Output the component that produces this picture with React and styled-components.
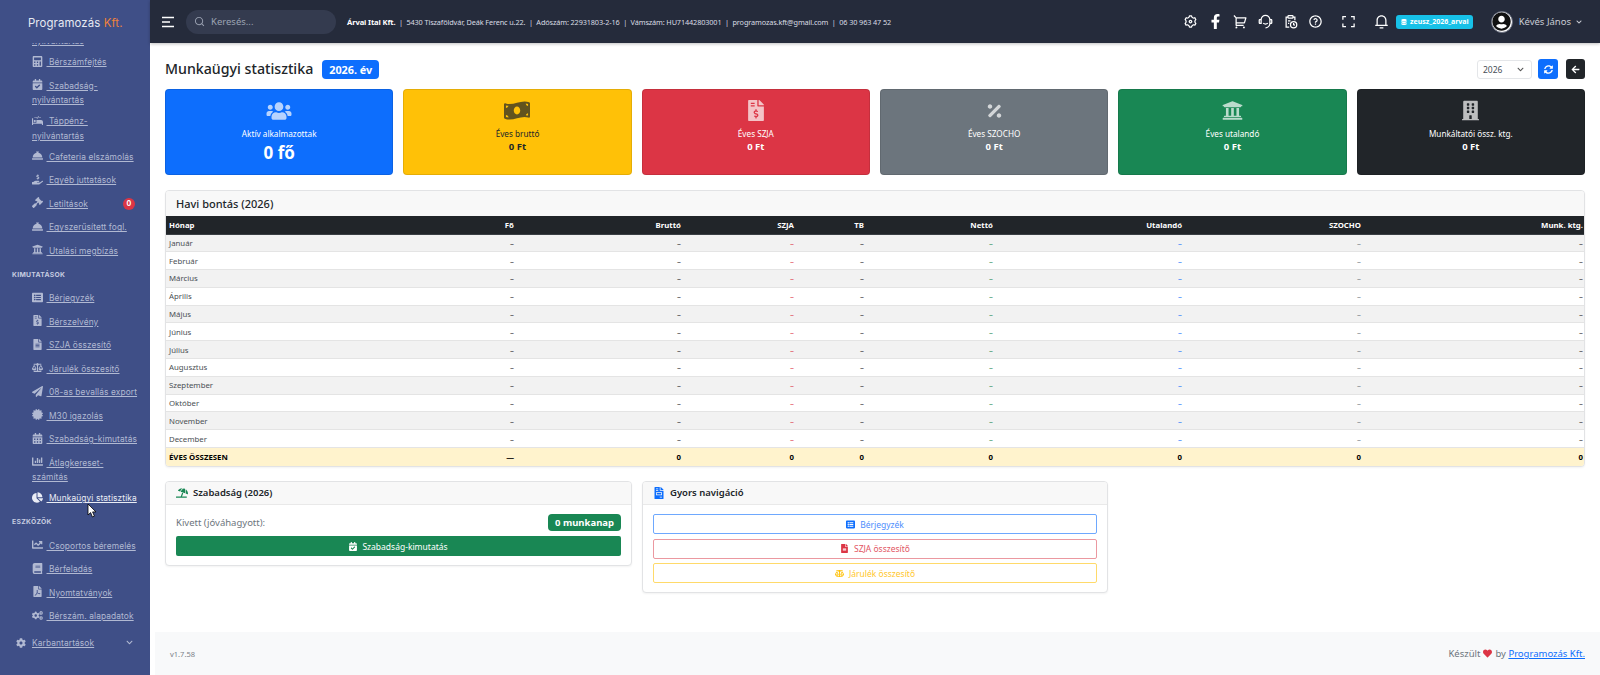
import React from "react";
import styled, { createGlobalStyle } from "styled-components";
import {
  FaCalculator, FaCalendarCheck, FaProcedures, FaConciergeBell, FaHandHoldingUsd, FaGavel,
  FaUniversity, FaListAlt, FaFileInvoiceDollar, FaFileAlt, FaBalanceScale, FaPaperPlane,
  FaCertificate, FaCalendarAlt, FaChartBar, FaChartPie, FaChartLine, FaBook, FaFilePdf,
  FaCogs, FaCog, FaChevronDown, FaFacebookF, FaDatabase, FaUserCircle, FaUsers,
  FaMoneyBillWave, FaPercentage, FaBuilding, FaSyncAlt, FaArrowLeft, FaUmbrellaBeach,
  FaFileInvoice, FaHeart,
} from "react-icons/fa";
import {
  RiSettings3Line, RiShoppingCart2Line, RiCustomerService2Line, RiQuestionLine,
  RiFullscreenLine, RiNotification3Line, RiSearchLine,
} from "react-icons/ri";

const GlobalStyle = createGlobalStyle`
  html, body { margin: 0; padding: 0; height: 100%; overflow: hidden; }
  body { font-family: "Noto Sans", "Open Sans", sans-serif; color: #212529; background: #fff; }
  * { box-sizing: border-box; }
`;

const Page = styled.div`
  display: flex;
  width: 1600px;
  height: 675px;
  overflow: hidden;
`;

const Sidebar = styled.aside`
  position: relative;
  width: 150px;
  flex-shrink: 0;
  display: flex;
  flex-direction: column;
  background: #3f4f87;
  font-family: Inter, sans-serif;
`;

const Logo = styled.div`
  height: 43px;
  flex-shrink: 0;
  padding: 14px 0 0 28px;
  font-size: 11.4px;
  line-height: 18px;
  letter-spacing: 0.1px;
  color: #e6e9f2;
  z-index: 1;
  background: #3f4f87;
  span { color: #f0823a; }
`;

const Nav = styled.nav`
  flex: 1;
  overflow: hidden;
`;

const NavInner = styled.div`
  margin-top: -28px;
`;

const NavItem = styled.a`
  position: relative;
  display: block;
  padding: 4.6px 12px 4.6px 32px;
  margin-bottom: ${(p) => (p.$wrapped ? -2.2 : 0)}px;
  font-size: 8.4px;
  line-height: 14.3px;
  letter-spacing: 0.1px;
  color: ${(p) => (p.$active ? "#e9ecf5" : "#b1b9d2")};
  svg {
    width: 11px;
    height: 11px;
    vertical-align: -1.5px;
    margin-right: 3.5px;
  }
  span { text-decoration: underline; }
`;

const SectionLabel = styled.div`
  padding: 0 0 0 12px;
  height: 24px;
  line-height: 24px;
  font-size: 6.8px;
  font-weight: 700;
  letter-spacing: 0.3px;
  color: #c6cce0;
`;

const NavBadge = styled.span`
  position: absolute;
  right: 15px;
  top: 6px;
  width: 12px;
  height: 12px;
  border-radius: 50%;
  background: #dc3545;
  color: #fff;
  font-size: 7px;
  font-weight: 700;
  line-height: 12px;
  text-align: center;
  text-decoration: none !important;
`;

const TreeItem = styled.a`
  display: flex;
  align-items: center;
  margin-top: 3px;
  padding: 4.5px 17px 4.5px 16px;
  font-size: 8.4px;
  line-height: 14.3px;
  letter-spacing: 0.1px;
  color: #b1b9d2;
  span { text-decoration: underline; flex: 1; }
  svg:first-child { width: 10px; height: 10px; margin-right: 6px; }
  svg:last-child { width: 7px; height: 7px; }
`;

const Cursor = styled.svg`
  position: absolute;
  left: 87px;
  top: 503px;
  width: 10px;
  height: 15px;
`;

const Column = styled.div`
  flex: 1;
  min-width: 0;
  display: flex;
  flex-direction: column;
`;

const TopBar = styled.header`
  height: 43px;
  flex-shrink: 0;
  display: flex;
  align-items: center;
  background: #252b3b;
  color: #fff;
  padding-left: 12px;
  box-shadow: 0 1px 3px rgba(0, 0, 0, 0.25);
  z-index: 1;
`;

const Burger = styled.svg`
  width: 13px;
  height: 12px;
  flex-shrink: 0;
`;

const SearchBox = styled.div`
  margin-left: 11px;
  width: 150px;
  height: 24px;
  border-radius: 12px;
  background: #343b4f;
  display: flex;
  align-items: center;
  gap: 6px;
  padding-left: 8px;
  font-size: 9.5px;
  color: #9ca3b3;
  svg { width: 11px; height: 11px; }
`;

const CompanyInfo = styled.div`
  margin-left: 11px;
  font-size: 7.3px;
  letter-spacing: -0.12px;
  color: #d9dce3;
  white-space: nowrap;
  b { color: #fff; font-weight: 700; font-size: 7.6px; }
`;

const TopIcons = styled.div`
  margin-left: auto;
  display: flex;
  align-items: center;
  gap: 10px;
  svg { width: 15px; height: 15px; display: block; }
`;

const TopGroup = styled.div`
  display: flex;
  align-items: center;
  margin-left: 8px;
`;

const DbBadge = styled.span`
  display: flex;
  align-items: center;
  gap: 3px;
  height: 14px;
  margin-left: -3px;
  padding: 0 4px 0 5px;
  border-radius: 3px;
  background: #17c1e8;
  font-size: 7px;
  font-weight: 700;
  white-space: nowrap;
  svg { width: 6px; height: 6px; }
`;

const UserBox = styled.div`
  display: flex;
  align-items: center;
  margin: 0 18px 0 18px;
  font-size: 9.5px;
  color: #c9ccd4;
  gap: 6px;
  white-space: nowrap;
`;

const Avatar = styled.span`
  width: 22px;
  height: 22px;
  border-radius: 50%;
  background: #fff;
  border: 1.5px solid #6b7080;
  display: block;
  overflow: hidden;
  svg { display: block; width: 19px; height: 19px; color: #111; }
`;

const UserChevron = styled(FaChevronDown)`
  width: 6px;
  height: 6px;
  margin-left: -1px;
`;

const Main = styled.main`
  flex: 1;
  min-height: 0;
  display: flex;
  flex-direction: column;
  padding: 16px 15px 0 15px;
`;

const PageHead = styled.div`
  display: flex;
  align-items: center;
  height: 20px;
`;

const Title = styled.h1`
  margin: 0;
  font-size: 14.2px;
  font-weight: 500;
  line-height: 20px;
`;

const YearBadge = styled.span`
  margin-left: 9px;
  height: 19px;
  padding: 0 7px;
  border-radius: 4px;
  background: #0d6efd;
  color: #fff;
  font-size: 10.8px;
  font-weight: 700;
  line-height: 19px;
`;

const HeadActions = styled.div`
  margin-left: auto;
  display: flex;
  align-items: center;
  gap: 6px;
`;

const YearSelect = styled.div`
  width: 55px;
  height: 19px;
  display: flex;
  align-items: center;
  justify-content: space-between;
  padding: 0 7px 0 5px;
  border: 1px solid #e4e6e9;
  border-radius: 3px;
  font-size: 8.5px;
  color: #495057;
  svg { width: 7px; height: 7px; color: #555; }
`;

const IconButton = styled.button`
  width: ${(p) => p.$w}px;
  height: 20px;
  border: 0;
  padding: 0;
  margin-left: ${(p) => p.$gap || 0}px;
  border-radius: 3px;
  display: flex;
  align-items: center;
  justify-content: center;
  color: #fff;
  background: ${(p) => p.$bg};
  svg { width: 9px; height: 9px; }
`;

const StatGrid = styled.div`
  display: grid;
  grid-template-columns: repeat(6, 1fr);
  gap: 10px;
  margin-top: 10px;
`;

const StatCard = styled.div`
  height: 86px;
  border-radius: 4px;
  border: 1px solid rgba(0, 0, 0, 0.1);
  background: ${(p) => p.$bg};
  color: ${(p) => (p.$dark ? "#212529" : "#fff")};
  display: flex;
  flex-direction: column;
  align-items: center;
  padding-top: 10px;
  text-align: center;
`;

const StatIcon = styled.div`
  height: 21px;
  display: flex;
  align-items: center;
  justify-content: center;
  svg {
    width: ${(p) => p.$w}px;
    height: ${(p) => p.$h}px;
    opacity: 0.7;
  }
`;

const StatLabel = styled.div`
  margin-top: 7px;
  font-size: 8.2px;
  line-height: 12px;
`;

const StatValue = styled.div`
  font-weight: 700;
  font-size: ${(p) => (p.$big ? 17 : 9.5)}px;
  line-height: ${(p) => (p.$big ? 22 : 13)}px;
  margin-top: ${(p) => (p.$big ? 2 : 0)}px;
`;

const Panel = styled.section`
  border: 1px solid #e2e3e5;
  border-radius: 4px;
  overflow: hidden;
  background: #fff;
  box-shadow: 0 1px 2px rgba(0, 0, 0, 0.05);
`;

const TablePanel = styled(Panel)`
  margin-top: 15px;
`;

const PanelTitle = styled.div`
  height: 25px;
  display: flex;
  align-items: center;
  padding-left: 10px;
  background: #f8f8f8;
  font-size: 11px;
  font-weight: 500;
`;

const Table = styled.table`
  width: 100%;
  table-layout: fixed;
  border-collapse: collapse;
  font-size: 7.8px;
`;

const Col = styled.col`
  width: ${(p) => p.$w}px;
`;

const HeadCell = styled.th`
  height: 18px;
  padding: 0 2px 0 ${(p) => (p.$left ? 3 : 2)}px;
  background: #212529;
  color: #fff;
  font-weight: 700;
  text-align: ${(p) => (p.$left ? "left" : "right")};
  border-bottom: 1px solid #3a3f44;
`;

const Row = styled.tr`
  height: 17.8px;
  background: ${(p) => (p.$striped ? "#f2f2f2" : "#fff")};
`;

const Cell = styled.td`
  padding: 0 2px 0 ${(p) => (p.$left ? 3 : 2)}px;
  text-align: ${(p) => (p.$left ? "left" : "right")};
  color: ${(p) => p.$color || "#4a4f54"};
  border-bottom: 1px solid #e4e4e4;
`;

const TotalRow = styled.tr`
  height: 18px;
  background: #fff3cd;
  font-weight: 700;
  color: #000;
`;

const TotalCell = styled.td`
  padding: 0 2px 0 ${(p) => (p.$left ? 3 : 2)}px;
  text-align: ${(p) => (p.$left ? "left" : "right")};
`;

const BottomRow = styled.div`
  display: flex;
  align-items: flex-start;
  gap: 10px;
  margin-top: 14px;
`;

const SmallPanel = styled(Panel)`
  width: ${(p) => p.$w}px;
`;

const SmallTitle = styled.div`
  height: 23px;
  display: flex;
  align-items: center;
  gap: 5px;
  padding-left: 10px;
  background: #f8f8f8;
  border-bottom: 1.5px solid #e9e9e9;
  font-size: 9.5px;
  font-weight: 600;
  svg { width: 12px; height: 12px; color: ${(p) => p.$iconColor}; }
`;

const PanelBody = styled.div`
  padding: 9.5px 10px 9px;
  display: flex;
  flex-direction: column;
  gap: ${(p) => p.$gap}px;
`;

const KeyRow = styled.div`
  display: flex;
  align-items: center;
  justify-content: space-between;
  height: 17px;
  font-size: 9.5px;
  color: #6c757d;
`;

const DaysBadge = styled.span`
  height: 17px;
  padding: 0 7px;
  border-radius: 4px;
  background: #198754;
  color: #fff;
  font-size: 9.5px;
  font-weight: 700;
  line-height: 17px;
`;

const ActionButton = styled.a`
  height: 20px;
  display: flex;
  align-items: center;
  justify-content: center;
  gap: 5px;
  border-radius: 2px;
  font-size: 8.5px;
  color: #fff;
  background: #198754;
  svg { width: 8px; height: 9px; }
`;

const OutlineButton = styled.a`
  height: 20px;
  display: flex;
  align-items: center;
  justify-content: center;
  gap: 5px;
  border-radius: 2px;
  border: 1px solid ${(p) => p.$border};
  font-size: 8.5px;
  color: ${(p) => p.$text};
  svg { width: 9px; height: 9px; color: ${(p) => p.$color}; }
`;

const Footer = styled.footer`
  margin-left: 5px;
  height: 43px;
  flex-shrink: 0;
  display: flex;
  align-items: center;
  justify-content: space-between;
  padding: 0 15px;
  background: #f8f9fa;
`;

const Version = styled.span`
  font-size: 7.5px;
  color: #7c8288;
`;

const Credit = styled.span`
  font-size: 9.5px;
  color: #6c757d;
  svg { width: 9px; height: 9px; color: #dc3545; margin: 0 3px; vertical-align: -1px; }
  a { color: #0d6efd; text-decoration: underline; }
`;

const navEntries = [
  { icon: FaCalendarCheck, label: "Munkaidő-nyilvántartás", wrapped: true },
  { icon: FaCalculator, label: "Bérszámfejtés" },
  { icon: FaCalendarCheck, label: "Szabadság-nyilvántartás", wrapped: true },
  { icon: FaProcedures, label: "Táppénz-nyilvántartás", wrapped: true },
  { icon: FaConciergeBell, label: "Cafeteria elszámolás" },
  { icon: FaHandHoldingUsd, label: "Egyéb juttatások" },
  { icon: FaGavel, label: "Letiltások", badge: "0" },
  { icon: FaConciergeBell, label: "Egyszerűsített fogl." },
  { icon: FaUniversity, label: "Utalási megbízás" },
  { section: "KIMUTATÁSOK" },
  { icon: FaListAlt, label: "Bérjegyzék" },
  { icon: FaFileInvoiceDollar, label: "Bérszelvény" },
  { icon: FaFileAlt, label: "SZJA összesítő" },
  { icon: FaBalanceScale, label: "Járulék összesítő" },
  { icon: FaPaperPlane, label: "08-as bevallás export" },
  { icon: FaCertificate, label: "M30 igazolás" },
  { icon: FaCalendarAlt, label: "Szabadság-kimutatás" },
  { icon: FaChartBar, label: "Átlagkereset-számítás", wrapped: true },
  { icon: FaChartPie, label: "Munkaügyi statisztika", active: true },
  { section: "ESZKÖZÖK" },
  { icon: FaChartLine, label: "Csoportos béremelés" },
  { icon: FaBook, label: "Bérfeladás" },
  { icon: FaFilePdf, label: "Nyomtatványok" },
  { icon: FaCogs, label: "Bérszám. alapadatok" },
];

const stats = [
  { icon: FaUsers, w: 26, h: 20, label: "Aktív alkalmazottak", value: "0 fő", bg: "#0d6efd", big: true },
  { icon: FaMoneyBillWave, w: 26, h: 21, label: "Éves bruttó", value: "0 Ft", bg: "#ffc107", dark: true },
  { icon: FaFileInvoiceDollar, w: 16, h: 21, label: "Éves SZJA", value: "0 Ft", bg: "#dc3545" },
  { icon: FaPercentage, w: 17, h: 18, label: "Éves SZOCHO", value: "0 Ft", bg: "#6c757d" },
  { icon: FaUniversity, w: 21, h: 21, label: "Éves utalandó", value: "0 Ft", bg: "#198754" },
  { icon: FaBuilding, w: 17, h: 21, label: "Munkáltatói össz. ktg.", value: "0 Ft", bg: "#212529" },
];

const months = ["Január", "Február", "Március", "Április", "Május", "Június", "Július", "Augusztus", "Szeptember", "Október", "November", "December"];

const columns = [
  { title: "Fő", width: 175, color: "#212529", total: "—" },
  { title: "Bruttó", width: 167, color: "#212529", total: "0" },
  { title: "SZJA", width: 113, color: "#dc3545", total: "0" },
  { title: "TB", width: 70, color: "#212529", total: "0" },
  { title: "Nettó", width: 129, color: "#198754", total: "0" },
  { title: "Utalandó", width: 189, color: "#0d6efd", total: "0" },
  { title: "SZOCHO", width: 179, color: "#6c757d", total: "0" },
  { title: "Munk. ktg.", width: 222, color: "#212529", total: "0" },
];

function ClipboardClock() {
  return (
    <svg viewBox="0 0 24 24" fill="none" stroke="currentColor" strokeWidth="2">
      <path d="M10 21H5V5h3M16 5h3v5" />
      <rect x="8" y="2.5" width="8" height="4" rx="1" />
      <path d="M8 11h4M8 15h2" />
      <circle cx="17" cy="17" r="5" />
      <path d="M17 14.5V17l1.8 1.2" />
    </svg>
  );
}

export default function App() {
  return (
    <Page>
      <GlobalStyle />
      <Sidebar>
        <Logo>Programozás <span>Kft.</span></Logo>
        <Nav>
          <NavInner>
            {navEntries.map((entry) =>
              entry.section ? (
                <SectionLabel key={entry.section}>{entry.section}</SectionLabel>
              ) : (
                <NavItem key={entry.label} $active={entry.active} $wrapped={entry.wrapped}>
                  <entry.icon />
                  <span>{"\u00a0" + entry.label}</span>
                  {entry.badge && <NavBadge>{entry.badge}</NavBadge>}
                </NavItem>
              )
            )}
            <TreeItem>
              <FaCog />
              <span>Karbantartások</span>
              <FaChevronDown />
            </TreeItem>
          </NavInner>
        </Nav>
        <Cursor viewBox="0 0 10 15">
          <path d="M1 1v11l2.6-2.4L5.4 14l2-.9-1.8-4.2H9z" fill="#fff" stroke="#000" strokeWidth="0.8" />
        </Cursor>
      </Sidebar>
      <Column>
        <TopBar>
          <Burger viewBox="0 0 13 12">
            <path d="M0 1.5h12M0 6h8M0 10.5h12" stroke="#fff" strokeWidth="1.3" />
          </Burger>
          <SearchBox>
            <RiSearchLine />
            Keresés...
          </SearchBox>
          <CompanyInfo>
            <b>Árvai Ital Kft.</b>&nbsp; | &nbsp;5430 Tiszaföldvár, Deák Ferenc u.22.&nbsp; | &nbsp;Adószám: 22931803-2-16&nbsp; | &nbsp;Vámszám: HU71442803001&nbsp; | &nbsp;programozas.kft@gmail.com&nbsp; | &nbsp;06 30 963 47 52
          </CompanyInfo>
          <TopIcons>
            <RiSettings3Line />
            <FaFacebookF />
            <RiShoppingCart2Line />
            <RiCustomerService2Line />
            <ClipboardClock />
            <RiQuestionLine />
            <TopGroup>
              <RiFullscreenLine />
            </TopGroup>
            <TopGroup>
              <RiNotification3Line />
            </TopGroup>
            <DbBadge><FaDatabase />zeusz_2026_arvai</DbBadge>
          </TopIcons>
          <UserBox>
            <Avatar><FaUserCircle /></Avatar>
            Kévés János
            <UserChevron />
          </UserBox>
        </TopBar>
        <Main>
          <PageHead>
            <Title>Munkaügyi statisztika</Title>
            <YearBadge>2026. év</YearBadge>
            <HeadActions>
              <YearSelect>2026<FaChevronDown /></YearSelect>
              <IconButton $bg="#0d6efd" $w={20}><FaSyncAlt /></IconButton>
              <IconButton $bg="#212529" $w={19} $gap={2}><FaArrowLeft /></IconButton>
            </HeadActions>
          </PageHead>
          <StatGrid>
            {stats.map((stat) => (
              <StatCard key={stat.label} $bg={stat.bg} $dark={stat.dark}>
                <StatIcon $w={stat.w} $h={stat.h}><stat.icon /></StatIcon>
                <StatLabel>{stat.label}</StatLabel>
                <StatValue $big={stat.big}>{stat.value}</StatValue>
              </StatCard>
            ))}
          </StatGrid>
          <TablePanel>
            <PanelTitle>Havi bontás (2026)</PanelTitle>
            <Table>
              <colgroup>
                <Col $w={175} />
                {columns.map((c) => <Col key={c.title} $w={c.width} />)}
              </colgroup>
              <thead>
                <tr>
                  <HeadCell $left>Hónap</HeadCell>
                  {columns.map((c) => <HeadCell key={c.title}>{c.title}</HeadCell>)}
                </tr>
              </thead>
              <tbody>
                {months.map((month, i) => (
                  <Row key={month} $striped={i % 2 === 0}>
                    <Cell $left>{month}</Cell>
                    {columns.map((c) => <Cell key={c.title} $color={c.color}>–</Cell>)}
                  </Row>
                ))}
                <TotalRow>
                  <TotalCell $left>ÉVES ÖSSZESEN</TotalCell>
                  {columns.map((c) => <TotalCell key={c.title}>{c.total}</TotalCell>)}
                </TotalRow>
              </tbody>
            </Table>
          </TablePanel>
          <BottomRow>
            <SmallPanel $w={467}>
              <SmallTitle $iconColor="#198754"><FaUmbrellaBeach />Szabadság (2026)</SmallTitle>
              <PanelBody $gap={5}>
                <KeyRow>
                  Kivett (jóváhagyott):
                  <DaysBadge>0 munkanap</DaysBadge>
                </KeyRow>
                <ActionButton><FaCalendarCheck />Szabadság-kimutatás</ActionButton>
              </PanelBody>
            </SmallPanel>
            <SmallPanel $w={466}>
              <SmallTitle $iconColor="#0d6efd"><FaFileInvoice />Gyors navigáció</SmallTitle>
              <PanelBody $gap={4.5}>
                <OutlineButton $border="#6ea8fe" $text="#4d8dfd" $color="#0d6efd"><FaListAlt />Bérjegyzék</OutlineButton>
                <OutlineButton $border="#eb98a0" $text="#e25563" $color="#dc3545"><FaFileAlt />SZJA összesítő</OutlineButton>
                <OutlineButton $border="#ffda6a" $text="#ffc72c" $color="#ffc107"><FaBalanceScale />Járulék összesítő</OutlineButton>
              </PanelBody>
            </SmallPanel>
          </BottomRow>
        </Main>
        <Footer>
          <Version>v1.7.58</Version>
          <Credit>Készült<FaHeart />by <a>Programozás Kft.</a></Credit>
        </Footer>
      </Column>
    </Page>
  );
}
